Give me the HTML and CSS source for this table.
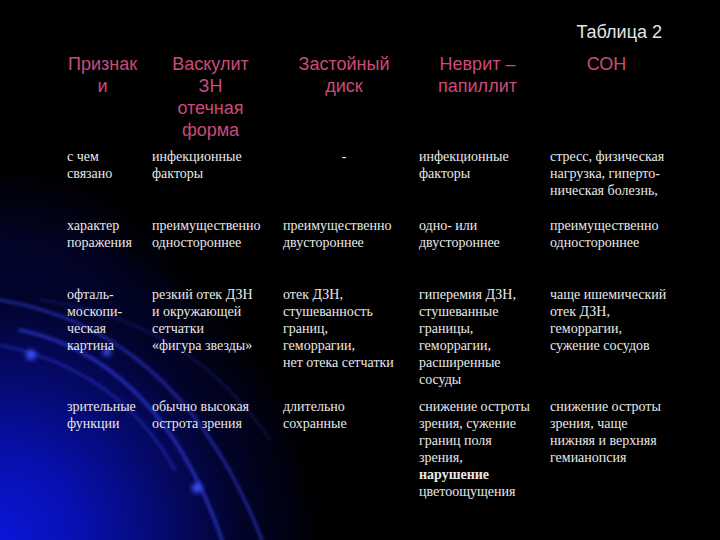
FILE: index.html
```html
<!DOCTYPE html>
<html lang="ru">
<head>
<meta charset="utf-8">
<title>Таблица 2</title>
<link rel="stylesheet" href="styles.css">
</head>
<body>
<div class="slide">
  <svg class="bg" width="720" height="540" viewBox="0 0 720 540" xmlns="http://www.w3.org/2000/svg">
    <defs>
      <filter id="soft" x="-20%" y="-20%" width="140%" height="140%">
        <feGaussianBlur stdDeviation="1.6"/>
      </filter>
      <filter id="glow" x="-100%" y="-100%" width="300%" height="300%">
        <feGaussianBlur stdDeviation="2.5"/>
      </filter>
    </defs>
    <g fill="none" stroke="#3848ff" stroke-linecap="round" filter="url(#soft)">
      <path d="M 0 300 Q 180 330 262 540" stroke-width="3" stroke-opacity="0.5"/>
      <path d="M 20 330 Q 160 360 222 540" stroke-width="3.5" stroke-opacity="0.55"/>
      <path d="M 0 345 Q 120 370 175 470" stroke-width="2.5" stroke-opacity="0.4"/>
      <path d="M 40 300 Q 190 320 270 440" stroke-width="2" stroke-opacity="0.25"/>
    </g>
    <g fill="#4050ff" filter="url(#glow)">
      <circle cx="31" cy="355" r="5"/>
      <circle cx="107" cy="352" r="4"/>
      <circle cx="197" cy="488" r="5"/>
    </g>
  </svg>
  <div class="content">
    <div class="title">Таблица 2</div>
    <table class="grid">
      <colgroup>
        <col class="c1"><col class="c2"><col class="c3"><col class="c4"><col class="c5">
      </colgroup>
      <thead>
        <tr class="r-head">
          <th>Признак<br>и</th>
          <th>Васкулит<br>ЗН<br>отечная<br>форма</th>
          <th>Застойный<br>диск</th>
          <th>Неврит –<br>папиллит</th>
          <th>СОН</th>
        </tr>
      </thead>
      <tbody>
        <tr class="r1">
          <td>с чем<br>связано</td>
          <td>инфекционные<br>факторы</td>
          <td class="center">-</td>
          <td>инфекционные<br>факторы</td>
          <td>стресс, физическая<br>нагрузка, гиперто-<br>ническая болезнь,</td>
        </tr>
        <tr class="r2">
          <td>характер<br>поражения</td>
          <td>преимущественно<br>одностороннее</td>
          <td>преимущественно<br>двустороннее</td>
          <td>одно- или<br>двустороннее</td>
          <td>преимущественно<br>одностороннее</td>
        </tr>
        <tr class="r3">
          <td>офталь-<br>москопи-<br>ческая<br>картина</td>
          <td>резкий отек ДЗН<br>и окружающей<br>сетчатки<br>«фигура звезды»</td>
          <td>отек ДЗН,<br>стушеванность<br>границ,<br>геморрагии,<br>нет отека сетчатки</td>
          <td>гиперемия ДЗН,<br>стушеванные<br>границы,<br>геморрагии,<br>расширенные<br>сосуды</td>
          <td>чаще ишемический<br>отек ДЗН,<br>геморрагии,<br>сужение сосудов</td>
        </tr>
        <tr class="r4">
          <td>зрительные<br>функции</td>
          <td>обычно высокая<br>острота зрения</td>
          <td>длительно<br>сохранные</td>
          <td>снижение остроты<br>зрения, сужение<br>границ поля<br>зрения,<br><b>нарушение</b><br>цветоощущения</td>
          <td>снижение остроты<br>зрения, чаще<br>нижняя и верхняя<br>гемианопсия</td>
        </tr>
      </tbody>
    </table>
  </div>
</div>
</body>
</html>
```
FILE: styles.css
```css
html, body {
  margin: 0;
  padding: 0;
  background: #000;
}

.slide {
  position: relative;
  width: 720px;
  height: 540px;
  overflow: hidden;
  background:
    radial-gradient(ellipse 320px 320px at 0 100%, #0a16d8 0%, #0810b0 25%, #050a70 50%, #02032a 75%, rgba(0,0,0,0) 100%),
    radial-gradient(ellipse 200px 170px at 0 62%, rgba(10,20,160,0.5) 0%, rgba(0,0,0,0) 100%),
    #000;
}

.bg {
  position: absolute;
  left: 0;
  top: 0;
}

.content {
  position: relative;
  padding: 21px 0 0 60px;
}

.title {
  width: 602px;
  text-align: right;
  font-family: "Liberation Sans", Arial, sans-serif;
  font-size: 18px;
  line-height: 22px;
  color: #e4e4e4;
}

.grid {
  margin-top: 10px;
  border-collapse: collapse;
  table-layout: fixed;
  width: 610px;
}

.c1 { width: 85px; }
.c2 { width: 131px; }
.c3 { width: 136px; }
.c4 { width: 131px; }
.c5 { width: 127px; }

.grid th {
  font-family: "Liberation Sans", Arial, sans-serif;
  font-weight: normal;
  font-size: 18px;
  line-height: 22px;
  color: #cc4a78;
  text-align: center;
  vertical-align: top;
  padding: 0;
  white-space: nowrap;
}

.grid td {
  font-family: "Liberation Serif", "Times New Roman", serif;
  font-size: 14px;
  line-height: 17px;
  color: #e8e8e8;
  vertical-align: top;
  padding: 0 0 0 7px;
  white-space: nowrap;
}

.grid td b {
  font-weight: bold;
}

.grid td.center {
  text-align: center;
  padding-left: 0;
}

.r-head { height: 95px; }
.r1 { height: 69px; }
.r2 { height: 69px; }
.r3 { height: 112px; }
```
